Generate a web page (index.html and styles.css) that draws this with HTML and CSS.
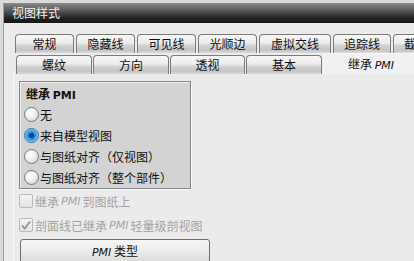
FILE: index.html
```html
<!DOCTYPE html>
<html lang="zh">
<head>
  <meta charset="UTF-8" />
  <title>视图样式</title>
  <link rel="stylesheet" href="styles.css">
</head>
<body>
  <div class="frame">
    <div class="window">
      <div class="titlebar">视图样式</div>

      <div class="tabs">
        <div class="tab-row row-top">
          <div class="tab w59">常规</div>
          <div class="tab w59">隐藏线</div>
          <div class="tab w59">可见线</div>
          <div class="tab w59">光顺边</div>
          <div class="tab w72">虚拟交线</div>
          <div class="tab w58">追踪线</div>
          <div class="tab w58">截面线</div>
        </div>
        <div class="tab-row row-bottom">
          <div class="tab w76">螺纹</div>
          <div class="tab w76">方向</div>
          <div class="tab w75">透视</div>
          <div class="tab w76">基本</div>
          <div class="tab tab-active">继承 <i class="latin">PMI</i></div>
        </div>
      </div>

      <div class="panel">
        <div class="group">
          <div class="group-title">继承 <span class="latin">PMI</span></div>
          <label class="radio-row"><span class="radio"></span>无</label>
          <label class="radio-row"><span class="radio checked"></span>来自模型视图</label>
          <label class="radio-row"><span class="radio"></span>与图纸对齐（仅视图）</label>
          <label class="radio-row"><span class="radio"></span>与图纸对齐（整个部件）</label>
        </div>

        <div class="check-row"><span class="check"></span>继承 <i class="latin">PMI</i> 到图纸上</div>
        <div class="check-row"><span class="check checked">
          <svg width="12" height="12" viewBox="0 0 12 12"><path d="M2 6.5 L4.8 9.5 L10 2.5" fill="none" stroke="#9a9a9a" stroke-width="2"/></svg>
        </span>剖面线已继承 <i class="latin">PMI</i> 轻量级剖视图</div>

        <button class="btn"><i class="latin">PMI</i> 类型</button>
      </div>
    </div>
  </div>
</body>
</html>
```

FILE: styles.css
```css
body {
  margin: 0;
  background: #ebebeb;
  font-family: "Noto Sans CJK SC", sans-serif;
  font-size: 12px;
  color: #111;
}
.frame {
  height: 261px;
  padding: 3px 0 0 3px;
  box-sizing: border-box;
  background: #dadada;
  overflow: hidden;
}
.window {
  height: 100%;
  background: #ebebeb;
  border-left: 1px solid #9c9c9c;
}
.titlebar {
  height: 20px;
  line-height: 20px;
  padding-left: 8px;
  color: #f2f2f2;
  font-size: 12px;
  background: linear-gradient(to bottom, #8a8a8a 0%, #555 40%, #222 75%, #151515 100%);
}
.latin {
  font-family: "DejaVu Sans", sans-serif;
  font-size: 11px;
}
.tabs {
  margin-top: 11px;
  padding-left: 11px;
}
.tab-row {
  display: flex;
  gap: 2px;
  white-space: nowrap;
  overflow: hidden;
}
.row-bottom {
  padding-left: 1px;
  gap: 1px;
  height: 21px;
  align-items: flex-end;
}
.tab {
  flex: none;
  height: 19px;
  line-height: 18px;
  text-align: center;
  box-sizing: border-box;
  border: 1px solid #7c7c7c;
  border-bottom: none;
  border-radius: 4px 4px 0 0;
  background: linear-gradient(to bottom, #f7f7f7 0%, #ececec 45%, #d0d0d0 60%, #c5c5c5 85%, #dadada 100%);
  overflow: hidden;
}
.row-bottom .tab {
  margin-top: -2px;
}
.w58 { width: 58px; }
.w59 { width: 59px; }
.w72 { width: 72px; }
.w75 { width: 75px; }
.w76 { width: 76px; }
.tab-active {
  width: 96px;
  height: 22px;
  line-height: 20px;
  margin-bottom: -1px;
  position: relative;
  z-index: 1;
  border-color: #f8f8f8;
  background: #f1f1f1;
}
.panel {
  margin-left: 9px;
  margin-top: -1px;
  padding: 7px 0 0 5px;
  border-top: 1px solid #fcfcfc;
  border-left: 1px solid #fcfcfc;
  height: 200px;
}
.group {
  width: 172px;
  height: 108px;
  box-sizing: border-box;
  border: 1px solid #858585;
  box-shadow: 1px 1px 0 #fafafa, inset 1px 1px 0 #f0f0f0;
  background: #d3d3d3;
  padding: 4px 0 0 4px;
}
.group-title {
  height: 16px;
  line-height: 16px;
  padding-left: 2px;
  margin-bottom: 2px;
  font-weight: bold;
}
.group-title .latin {
  font-weight: bold;
}
.radio-row {
  display: flex;
  align-items: center;
  height: 21px;
  gap: 1px;
}
.radio {
  width: 15px;
  height: 15px;
  box-sizing: border-box;
  border-radius: 50%;
  border: 1px solid #7a7a7a;
  background: radial-gradient(circle at 40% 35%, #ffffff 0%, #f2f2f2 40%, #c9c9c9 100%);
}
.radio.checked {
  border-color: #3a6ea5;
  background: radial-gradient(circle, #0b3f7a 0%, #0b3f7a 22%, #1f86d8 32%, #4aa8ec 55%, #cde6f8 80%, #e6f2fb 100%);
}
.check-row {
  display: flex;
  align-items: center;
  height: 24px;
  gap: 2px;
  color: #a3a3a3;
  white-space: nowrap;
  width: 189px;
  overflow: hidden;
}
.check-row:first-of-type {
  margin-top: 3px;
}
.check {
  flex: none;
  width: 14px;
  height: 14px;
  box-sizing: border-box;
  border: 1px solid #b9b9b9;
  border-radius: 2px;
  background: linear-gradient(to bottom, #f4f4f4, #e4e4e4);
  display: flex;
  align-items: center;
  justify-content: center;
}
.btn {
  display: block;
  margin: 2px 0 0 1px;
  width: 190px;
  height: 26px;
  border: 1px solid #6f6f6f;
  border-radius: 3px;
  background: linear-gradient(to bottom, #f6f6f6 0%, #eaeaea 50%, #d9d9d9 100%);
  font-family: "Noto Sans CJK SC", sans-serif;
  font-size: 12px;
  color: #111;
  padding: 0 0 4px;
}
```
